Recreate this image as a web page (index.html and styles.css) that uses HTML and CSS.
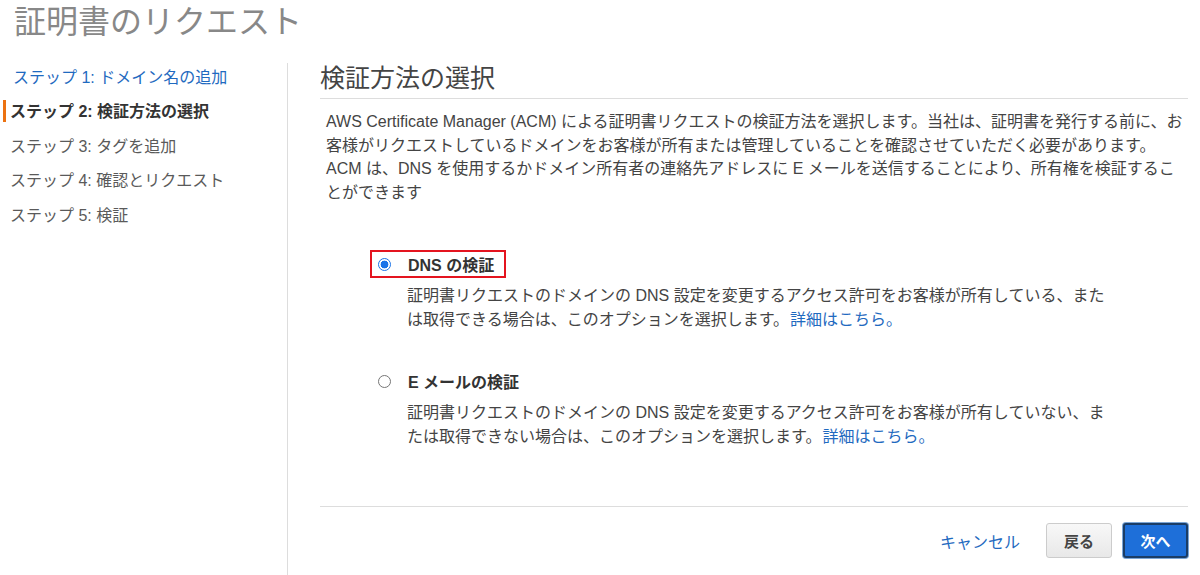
FILE: index.html
```html
<!DOCTYPE html>
<html lang="ja">
<head>
<meta charset="utf-8">
<title>証明書のリクエスト</title>
<link rel="stylesheet" href="styles.css">
</head>
<body>
<h1 class="page-title">証明書のリクエスト</h1>
<div class="layout">
  <nav class="steps">
    <a class="step step-link" href="#">ステップ 1: ドメイン名の追加</a>
    <div class="step step-active">ステップ 2: 検証方法の選択</div>
    <div class="step">ステップ 3: タグを追加</div>
    <div class="step">ステップ 4: 確認とリクエスト</div>
    <div class="step">ステップ 5: 検証</div>
  </nav>
  <main class="content">
    <h2 class="section-title">検証方法の選択</h2>
    <p class="intro">AWS Certificate Manager (ACM) による証明書リクエストの検証方法を選択します。当社は、証明書を発行する前に、お客様がリクエストしているドメインをお客様が所有または管理していることを確認させていただく必要があります。ACM は、DNS を使用するかドメイン所有者の連絡先アドレスに E メールを送信することにより、所有権を検証することができます</p>
    <div class="options">
      <div class="option">
        <label class="option-label highlighted">
          <span class="radio checked"></span>
          <span class="option-name">DNS の検証</span>
        </label>
        <p class="option-desc">証明書リクエストのドメインの DNS 設定を変更するアクセス許可をお客様が所有している、または取得できる場合は、このオプションを選択します。<a href="#" class="link">詳細はこちら。</a></p>
      </div>
      <div class="option">
        <label class="option-label">
          <span class="radio"></span>
          <span class="option-name">E メールの検証</span>
        </label>
        <p class="option-desc">証明書リクエストのドメインの DNS 設定を変更するアクセス許可をお客様が所有していない、または取得できない場合は、このオプションを選択します。<a href="#" class="link">詳細はこちら。</a></p>
      </div>
    </div>
    <div class="footer">
      <a href="#" class="cancel">キャンセル</a>
      <button class="btn btn-back">戻る</button>
      <button class="btn btn-next">次へ</button>
    </div>
  </main>
</div>
</body>
</html>
```

FILE: styles.css
```css
* { box-sizing: border-box; }
html, body { margin: 0; padding: 0; background: #fff; }
body {
  font-family: "Liberation Sans", "Noto Sans CJK JP", sans-serif;
  color: #444;
  font-size: 16px;
  width: 1200px;
  height: 575px;
  overflow: hidden;
}
.page-title {
  margin: 0;
  padding: 2px 0 0 14px;
  height: 58px;
  font-size: 32px;
  line-height: 40px;
  font-weight: normal;
  color: #888;
}
.layout {
  display: flex;
  margin-top: 5px;
  height: 512px;
}
.steps {
  width: 288px;
  flex: none;
  border-right: 1px solid #ddd;
  display: flex;
  flex-direction: column;
  padding-top: 3px;
}
.step {
  display: block;
  height: 34.4px;
  line-height: 24px;
  padding-left: 10px;
  color: #5a5a5a;
  font-size: 16px;
  text-decoration: none;
  position: relative;
}
.step-link { color: #1f6ac0; padding-left: 13px; }
.step-active { font-weight: bold; color: #333; }
.step-active::before {
  content: "";
  position: absolute;
  left: 3px;
  top: 0;
  width: 3px;
  height: 22px;
  background: #ec7211;
}
.content {
  flex: 1;
  padding: 0 12px 0 32px;
  display: flex;
  flex-direction: column;
}
.section-title {
  margin: 0;
  font-size: 25px;
  font-weight: normal;
  color: #444;
  line-height: 30px;
  padding-bottom: 5px;
  border-bottom: 1px solid #ddd;
}
.intro {
  margin: 11px 0 0 0;
  padding-left: 6px;
  line-height: 23.5px;
  color: #444;
}
.options {
  padding-left: 50px;
  margin-top: 46px;
}
.option { margin-bottom: 36px; }
.option-label {
  display: inline-flex;
  align-items: center;
  height: 28px;
  padding: 0 10px 0 6px;
  border: 2px solid transparent;
  font-weight: bold;
  color: #333;
  cursor: pointer;
}
.option-label.highlighted { border-color: #e4141f; }
.radio {
  width: 13px;
  height: 13px;
  border-radius: 50%;
  border: 1px solid #767676;
  margin-right: 17px;
  flex: none;
  background: #fff;
}
.radio.checked {
  border: 1px solid #1a73e8;
  background: radial-gradient(circle, #1a73e8 0 3.6px, #fff 4.2px);
}
.option-desc {
  margin: 6px 0 0 37px;
  width: 700px;
  line-height: 23.5px;
  color: #444;
}
.link {
  display: inline-block;
  color: #1f6ac0;
  text-decoration: none;
  margin-left: 1px;
}
.footer {
  margin-top: auto;
  border-top: 1px solid #ddd;
  display: flex;
  justify-content: flex-end;
  align-items: center;
  gap: 11px;
  padding: 16px 0 17px;
}
.cancel {
  color: #1f6ac0;
  text-decoration: none;
  margin-right: 15px;
  font-size: 16px;
}
.btn {
  font-family: inherit;
  font-size: 15px;
  font-weight: bold;
  height: 35px;
  border-radius: 3px;
  padding: 0;
  white-space: nowrap;
  cursor: pointer;
}
.btn-back {
  width: 66px;
  background: linear-gradient(#f8f8f8, #e8e8e8);
  border: 1px solid #ccc;
  color: #444;
}
.btn-next {
  width: 65px;
  background: #1e6fd9;
  border: 2px solid #1b3d66;
  box-shadow: 0 0 0 1px #7aa5d6;
  color: #fff;
}
```
